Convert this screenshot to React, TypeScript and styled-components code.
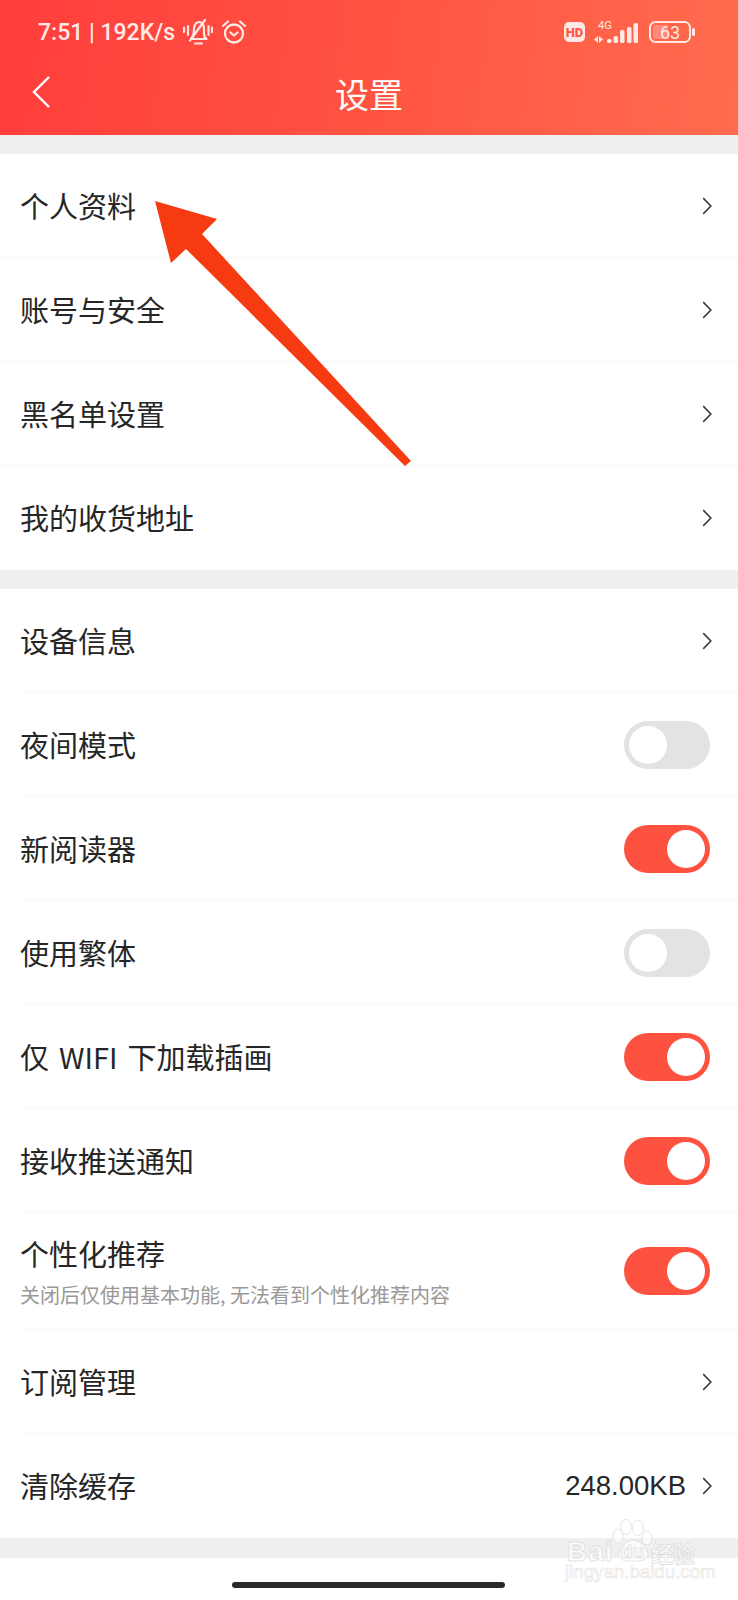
import React from 'react'
import styled, {createGlobalStyle} from 'styled-components'

const GlobalStyle = createGlobalStyle`
  html, body {
    margin: 0;
    padding: 0;
    background: #fff;
  }
`

const Page = styled.div`
  position: relative;
  width: 738px;
  height: 1600px;
  overflow: hidden;
  background: #fff;
  font-family: "Noto Sans CJK SC", "Noto Sans", sans-serif;
  color: #222;
`

const Header = styled.header`
  height: 135px;
  background: linear-gradient(98deg, #ff3d3c 0%, #ff5342 50%, #ff6c4e 100%);
  color: #fff;
`

const StatusBar = styled.div`
  height: 64px;
  display: flex;
  align-items: center;
  justify-content: space-between;
  padding: 0 43px 0 38px;
  color: #ffe9e4;
`

const StatusGroup = styled.div<{$gap: number}>`
  display: flex;
  align-items: center;
  gap: ${props => props.$gap}px;
`

const StatusText = styled.span`
  font-family: Roboto, sans-serif;
  font-size: 23px;
  font-weight: 500;
  white-space: pre;
`

const HdBadge = styled.span`
  width: 21px;
  height: 20px;
  border-radius: 5px;
  background: #ffe9e4;
  color: #ff5a45;
  font-family: Roboto, sans-serif;
  font-size: 13px;
  font-weight: 900;
  display: flex;
  align-items: center;
  justify-content: center;
`

const NavBar = styled.div`
  position: relative;
  height: 71px;
  display: flex;
  align-items: center;
  justify-content: center;
`

const BackButton = styled.svg`
  position: absolute;
  left: 32px;
  top: 11px;
`

const Title = styled.h1`
  margin: 0;
  font-size: 34px;
  font-weight: 400;
  line-height: 1;
  padding-bottom: 12px;
`

const Gap = styled.div<{$height: number}>`
  height: ${props => props.$height}px;
  background: #efefef;
`

const Row = styled.div<{$height?: number; $inset: boolean}>`
  height: ${props => props.$height ?? 104}px;
  box-sizing: border-box;
  margin-left: ${props => props.$inset ? 20 : 0}px;
  padding: 0 28px 0 ${props => props.$inset ? 0 : 20}px;
  display: flex;
  align-items: center;
  justify-content: space-between;
  border-bottom: 1px solid #f6f6f6;

  &:last-child {
    border-bottom: none;
  }
`

const Label = styled.div`
  font-size: 29px;
  line-height: 40px;
  padding-bottom: 2px;
  word-spacing: 3.5px;
  color: #262626;
`

const SubLabel = styled.div`
  font-size: 20px;
  line-height: 28px;
  margin-top: 6px;
  color: #999;
  white-space: pre;
`

const RowEnd = styled.div`
  display: flex;
  align-items: center;
  gap: 16px;
  margin-right: -2px;
`

const Value = styled.span`
  font-family: "Liberation Sans", sans-serif;
  font-size: 27.5px;
  color: #262626;
`

const Toggle = styled.div<{$on: boolean}>`
  width: 86px;
  height: 48px;
  box-sizing: border-box;
  padding: 5px;
  border-radius: 24px;
  background: ${props => props.$on ? '#fe5240' : '#e3e3e3'};
  display: flex;
  justify-content: ${props => props.$on ? 'flex-end' : 'flex-start'};
`

const Knob = styled.div`
  width: 38px;
  height: 38px;
  border-radius: 50%;
  background: #fff;
`

const Arrow = styled.svg`
  position: absolute;
  left: 0;
  top: 0;
  pointer-events: none;
`

const HomeBar = styled.div`
  position: absolute;
  left: 232px;
  bottom: 12px;
  width: 273px;
  height: 6px;
  border-radius: 3px;
  background: #2a2a2a;
`

const Watermark = styled.div`
  position: absolute;
  left: 564px;
  top: 1518px;
  width: 140px;
  height: 70px;
  color: rgba(255, 255, 255, 0.7);
  -webkit-text-stroke: 1px rgba(215, 215, 215, 0.7);
  pointer-events: none;
`

const WatermarkLogo = styled.div`
  position: absolute;
  left: 3px;
  top: 19px;
  font-family: "Liberation Sans", sans-serif;
  font-size: 28px;
  font-weight: 700;
  line-height: 30px;
  letter-spacing: 1px;
`

const WatermarkDu = styled.div`
  position: absolute;
  left: 57px;
  top: 23px;
  font-family: "Liberation Sans", sans-serif;
  font-size: 19px;
  font-weight: 700;
  line-height: 22px;
`

const WatermarkCn = styled.div`
  position: absolute;
  left: 87px;
  top: 20px;
  font-size: 22px;
  line-height: 28px;
  font-weight: 700;
  white-space: nowrap;
`

const WatermarkUrl = styled.div`
  position: absolute;
  left: 1px;
  top: 43px;
  font-family: "Liberation Sans", sans-serif;
  font-size: 18.7px;
  line-height: 22px;
  white-space: nowrap;
  -webkit-text-stroke: 0.7px rgba(215, 215, 215, 0.7);
`

const Paw = styled.svg`
  position: absolute;
  left: 46px;
  top: 0;
`

const Chevron = () => (
    <svg width="10" height="18" viewBox="0 0 10 18" fill="none" stroke="#444" strokeWidth="1.7">
        <path d="M1.2 1.2 L8.8 9 L1.2 16.8"/>
    </svg>
)

const BellOff = () => (
    <svg width="30" height="26" viewBox="0 0 30 26" fill="none" stroke="#ffe9e4" strokeWidth="2.2" strokeLinecap="round" strokeLinejoin="round">
        <path d="M8 20 C10 18 11 15 11 10 C11 6 13 3.5 16 3 C19 3.5 21 6 21 10 L21 15 C21 17 22 19 23.5 20 Z"/>
        <path d="M12 24.5 H19"/>
        <path d="M7 21.5 L22 1"/>
        <path d="M1 8.5 V13 M5 7 V16 M25.5 7 V16 M29 8.5 V13"/>
    </svg>
)

const AlarmClock = () => (
    <svg width="26" height="24" viewBox="0 0 26 24" fill="none" stroke="#ffe9e4" strokeWidth="2.3" strokeLinecap="round" strokeLinejoin="round">
        <circle cx="13" cy="13.5" r="9"/>
        <path d="M9.5 12.5 L13 15.5 L16.5 12.5"/>
        <path d="M2 6 L7 1.5 M24 6 L19 1.5"/>
    </svg>
)

const Signal = () => (
    <svg width="46" height="24" viewBox="0 0 46 24" fill="#ffe9e4">
        <text x="4" y="8.5" fontFamily="Roboto, sans-serif" fontSize="11">4G</text>
        <path d="M0 19.5 L4 16 V23 Z M5 16 L9 19.5 L5 23 Z"/>
        <rect x="13" y="19" width="4.5" height="4" rx="1.5"/>
        <rect x="19.5" y="16" width="4.5" height="7" rx="1.5"/>
        <rect x="26" y="10" width="4.5" height="13" rx="1.5"/>
        <rect x="33" y="7" width="4.5" height="16" rx="1.5"/>
        <rect x="39.5" y="3" width="4.5" height="20" rx="1.5"/>
    </svg>
)

const Battery = () => (
    <svg width="46" height="22" viewBox="0 0 46 22">
        <rect x="1" y="1" width="40" height="20" rx="5.5" fill="none" stroke="#ffe9e4" strokeWidth="2"/>
        <rect x="4" y="4" width="15" height="14" rx="2" fill="#ff8a7c"/>
        <rect x="43" y="7" width="3" height="8" rx="1.5" fill="#ffe9e4"/>
        <text x="21" y="17.5" textAnchor="middle" fontFamily="Roboto, sans-serif" fontSize="18" fill="#ffe9e4">63</text>
    </svg>
)

const RowItem: React.FC<{label: string; inset?: boolean; value?: string}> = ({label, inset = true, value}) => (
    <Row $inset={inset}>
        <Label>{label}</Label>
        <RowEnd>
            {value && <Value>{value}</Value>}
            <Chevron/>
        </RowEnd>
    </Row>
)

const ToggleItem: React.FC<{label: string; on: boolean}> = ({label, on}) => (
    <Row $inset={true}>
        <Label>{label}</Label>
        <Toggle $on={on}><Knob/></Toggle>
    </Row>
)

const App: React.FC = () => {
    return (
        <Page>
            <GlobalStyle/>
            <Header>
                <StatusBar>
                    <StatusGroup $gap={8}>
                        <StatusText>7:51 | 192K/s</StatusText>
                        <BellOff/>
                        <AlarmClock/>
                    </StatusGroup>
                    <StatusGroup $gap={9}>
                        <HdBadge>HD</HdBadge>
                        <Signal/>
                        <Battery/>
                    </StatusGroup>
                </StatusBar>
                <NavBar>
                    <BackButton width="20" height="34" viewBox="0 0 20 34" fill="none" stroke="#fff" strokeWidth="2.4">
                        <path d="M17 2 L2 17 L17 32"/>
                    </BackButton>
                    <Title>设置</Title>
                </NavBar>
            </Header>
            <Gap $height={19}/>
            <section>
                <RowItem label="个人资料" inset={false}/>
                <RowItem label="账号与安全" inset={false}/>
                <RowItem label="黑名单设置" inset={false}/>
                <RowItem label="我的收货地址" inset={false}/>
            </section>
            <Gap $height={19}/>
            <section>
                <RowItem label="设备信息"/>
                <ToggleItem label="夜间模式" on={false}/>
                <ToggleItem label="新阅读器" on={true}/>
                <ToggleItem label="使用繁体" on={false}/>
                <ToggleItem label="仅 WIFI 下加载插画" on={true}/>
                <ToggleItem label="接收推送通知" on={true}/>
                <Row $inset={true} $height={117}>
                    <div>
                        <Label>个性化推荐</Label>
                        <SubLabel>关闭后仅使用基本功能, 无法看到个性化推荐内容</SubLabel>
                    </div>
                    <Toggle $on={true}><Knob/></Toggle>
                </Row>
                <RowItem label="订阅管理"/>
                <RowItem label="清除缓存" value="248.00KB"/>
            </section>
            <Gap $height={20}/>
            <Arrow width="738" height="500" viewBox="0 0 738 500">
                <polygon points="155,201 217,219 202,234 411,461 405,466 186,249 171,263" fill="#f63a12"/>
            </Arrow>
            <Watermark>
                <Paw width="44" height="46" viewBox="0 0 44 46" fill="rgba(255,255,255,0.7)" stroke="rgba(215,215,215,0.7)" strokeWidth="1">
                    <ellipse cx="8" cy="18" rx="5" ry="7"/>
                    <ellipse cx="16" cy="9" rx="5.5" ry="7.5"/>
                    <ellipse cx="28" cy="10" rx="5.5" ry="7.5"/>
                    <ellipse cx="37" cy="20" rx="5" ry="7"/>
                    <path d="M23 22 C16 22 11 29 9 35 C8 41 14 44 23 43 C32 44 39 41 38 35 C36 29 30 22 23 22 Z"/>
                </Paw>
                <WatermarkLogo>Bai</WatermarkLogo>
                <WatermarkDu>du</WatermarkDu>
                <WatermarkCn>经验</WatermarkCn>
                <WatermarkUrl>jingyan.baidu.com</WatermarkUrl>
            </Watermark>
            <HomeBar/>
        </Page>
    )
}

export default App
